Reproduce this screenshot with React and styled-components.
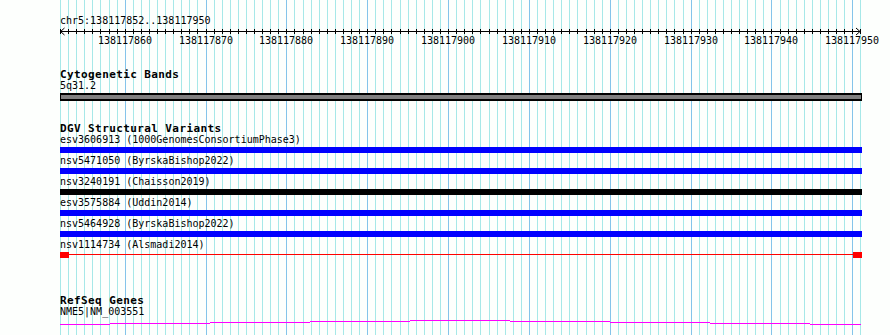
import React from "react";
import styled, { createGlobalStyle } from "styled-components";

const LIGHT = "#a6e8e8";
const DARK = "#84c4ea";
const START = 852;
const SCALE = 8.085;
const WIDTH = 802;

const GlobalStyle = createGlobalStyle`
  html, body {
    margin: 0;
    padding: 0;
    background: #fdfffd;
    overflow: hidden;
  }
`;

const Page = styled.div`
  position: relative;
  width: 890px;
  height: 335px;
  overflow: hidden;
  box-sizing: border-box;
  padding-left: 60px;
  font-family: "DejaVu Sans Mono", "Liberation Mono", monospace;
  color: #000;
`;

const GridLayer = styled.svg`
  position: absolute;
  left: 0;
  top: 0;
  display: block;
  shape-rendering: crispEdges;
`;

const Content = styled.div`
  position: relative;
  width: ${WIDTH}px;
  display: flex;
  flex-direction: column;
`;

const LocationLabel = styled.div`
  margin-top: 16px;
  font-size: 10px;
  line-height: 10px;
  height: 10px;
  white-space: nowrap;
`;

const RulerSvg = styled.svg`
  display: block;
  overflow: visible;
  font-family: "DejaVu Sans Mono", "Liberation Mono", monospace;
  font-size: 10px;
`;

const TrackTitle = styled.div`
  margin-top: ${(p) => p.$top}px;
  font-size: 11px;
  line-height: 11px;
  height: 11px;
  font-weight: bold;
  letter-spacing: 0.4px;
  white-space: nowrap;
`;

const SubLabel = styled.div`
  margin-top: 1px;
  font-size: 10px;
  line-height: 10px;
  height: 10px;
  white-space: nowrap;
`;

const Band = styled.div`
  margin-top: 2px;
  height: 8px;
  box-sizing: border-box;
  background: #808080;
  border-style: solid;
  border-color: #000;
  border-width: 2px 1px;
`;

const FeatureList = styled.div`
  margin-top: 1px;
  display: flex;
  flex-direction: column;
`;

const FeatureRow = styled.div`
  display: flex;
  flex-direction: column;
  margin-bottom: 3px;
`;

const FeatureLabel = styled.div`
  font-size: 10px;
  line-height: 10px;
  height: 10px;
  margin-bottom: 2px;
  white-space: nowrap;
`;

const FeatureBar = styled.div`
  height: 6px;
  background: ${(p) => p.$color};
`;

const SplitFeature = styled.div`
  height: 6px;
  display: flex;
  align-items: flex-start;
`;

const EndBlock = styled.div`
  width: 9px;
  height: 6px;
  background: #ff0000;
  flex: none;
`;

const Connector = styled.div`
  flex: 1;
  height: 1px;
  margin-top: 2px;
  background: #ff0000;
`;

const GeneSvg = styled.svg`
  display: block;
  shape-rendering: crispEdges;
`;

const variants = [
  { id: "esv3606913", src: "1000GenomesConsortiumPhase3", color: "#0000ff" },
  { id: "nsv5471050", src: "ByrskaBishop2022", color: "#0000ff" },
  { id: "nsv3240191", src: "Chaisson2019", color: "#000000" },
  { id: "esv3575884", src: "Uddin2014", color: "#0000ff" },
  { id: "nsv5464928", src: "ByrskaBishop2022", color: "#0000ff" },
  { id: "nsv1114734", src: "Alsmadi2014", split: true },
];

const posOf = (k) => Math.round(k * SCALE);

function Grid() {
  const lines = [];
  for (let k = 0; k < 100; k++) {
    const x = Math.round(60 + k * SCALE);
    const dark = (START + k) % 10 === 0;
    lines.push(
      <rect key={k} x={x} y={0} width={1} height={335} fill={dark ? DARK : LIGHT} />
    );
  }
  return (
    <GridLayer width={890} height={335} viewBox="0 0 890 335">
      {lines}
    </GridLayer>
  );
}

function Ruler() {
  const ticks = [];
  for (let k = 0; k < 100; k++) {
    const x = posOf(k) + 0.5;
    ticks.push(<line key={k} x1={x} x2={x} y1={3} y2={8} stroke="#000" strokeWidth={1} />);
  }
  const labels = [];
  for (let m = 0; m < 10; m++) {
    const k = 8 + m * 10;
    labels.push(
      <text key={m} x={posOf(k)} y={18} textAnchor="middle" fill="#000">
        {START + k + 138117000 - 0 > 0 ? `${138117000 + START + k}` : ""}
      </text>
    );
  }
  return (
    <RulerSvg width={WIDTH} height={20} viewBox={`0 0 ${WIDTH} 20`}>
      <g shapeRendering="crispEdges">
        <line x1={0} x2={800} y1={5.5} y2={5.5} stroke="#000" strokeWidth={1} />
        {ticks}
      </g>
      <polyline points="4.5,2 0.5,5.5 4.5,9" fill="none" stroke="#000" strokeWidth={1} />
      <polyline points="796,2 800,5.5 796,9" fill="none" stroke="#000" strokeWidth={1} />
      {labels}
    </RulerSvg>
  );
}

function GeneLine() {
  const segs = [
    [0, 50, 7.5],
    [50, 150, 6.5],
    [150, 250, 5.5],
    [250, 350, 4.5],
    [350, 450, 3.5],
    [450, 550, 4.5],
    [550, 650, 5.5],
    [650, 750, 6.5],
    [750, 801, 7.5],
  ];
  const d = segs.map(([a, b, y]) => `M${a} ${y}H${b}`).join("");
  return (
    <GeneSvg width={WIDTH} height={12} viewBox={`0 0 ${WIDTH} 12`}>
      <path d={d} stroke="#ff00ff" strokeWidth={1} fill="none" />
    </GeneSvg>
  );
}

export default function App() {
  return (
    <>
      <GlobalStyle />
      <Page>
        <Grid />
        <Content>
          <LocationLabel>chr5:138117852..138117950</LocationLabel>
          <Ruler />

          <TrackTitle $top={23}>Cytogenetic Bands</TrackTitle>
          <SubLabel>5q31.2</SubLabel>
          <Band />

          <TrackTitle $top={22}>DGV Structural Variants</TrackTitle>
          <FeatureList>
            {variants.map((v) => (
              <FeatureRow key={v.id}>
                <FeatureLabel>
                  {v.id} ({v.src})
                </FeatureLabel>
                {v.split ? (
                  <SplitFeature>
                    <EndBlock />
                    <Connector />
                    <EndBlock />
                  </SplitFeature>
                ) : (
                  <FeatureBar $color={v.color} />
                )}
              </FeatureRow>
            ))}
          </FeatureList>

          <TrackTitle $top={34}>RefSeq Genes</TrackTitle>
          <SubLabel>NME5|NM_003551</SubLabel>
          <GeneLine />
        </Content>
      </Page>
    </>
  );
}
